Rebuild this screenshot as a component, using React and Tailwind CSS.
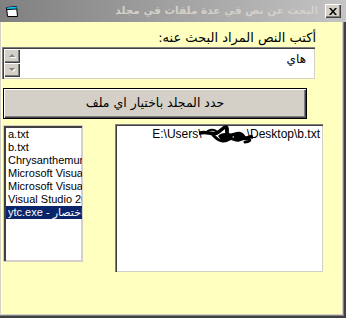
import React from "react";

const items = [
  "a.txt",
  "b.txt",
  "Chrysanthemum.jpg",
  "Microsoft Visual Studio 2010",
  "Microsoft Visual Basic 6.0",
  "Visual Studio 2010",
];

function ScrollBtn({ up }) {
  return (
    <div className="flex h-[14px] w-[16px] items-center justify-center bg-[#d4d0c8] shadow-[inset_1px_1px_0_#fff,inset_-1px_-1px_0_#404040,inset_-2px_-2px_0_#808080]">
      <svg width="7" height="4" viewBox="0 0 7 4">
        {up ? (
          <>
            <path d="M1 4 L4 1 L7 4 Z" fill="#fff" />
            <path d="M0 3 L3 0 L6 3 Z" fill="#808080" />
          </>
        ) : (
          <>
            <path d="M1 1 L7 1 L4 4 Z" fill="#fff" />
            <path d="M0 0 L6 0 L3 3 Z" fill="#808080" />
          </>
        )}
      </svg>
    </div>
  );
}

export default function App() {
  return (
    <div
      className="flex h-[318px] w-[346px] flex-col overflow-hidden bg-[#ffffc0] shadow-[inset_-2px_-2px_0_#404040,inset_-3px_-3px_0_#808080,inset_-4px_-4px_0_#d4d0c8,inset_1px_0_0_#d4d0c8,inset_2px_0_0_#fff]"
      style={{ fontFamily: '"Liberation Sans", "DejaVu Sans", Arial, sans-serif' }}
    >
      {/* Title bar */}
      <div className="flex h-[22px] shrink-0 items-center bg-linear-to-r from-[#808080] to-[#c4c4c4] pl-[6px] pr-[5px]">
        <svg width="12" height="11" viewBox="0 0 12 11" className="shrink-0">
          <path d="M0.5 1.5 L10.5 0.5 L11.5 10.5 L1.5 10.5 Z" fill="#fff" stroke="#000" />
          <path d="M1 1.5 L10.5 0.8 L10.8 3 L1.2 3.5 Z" fill="#00c8ff" />
          <path d="M1 3.5 L11 3" stroke="#000" />
        </svg>
        <div
          dir="rtl"
          className="ml-auto mr-[7px] text-[10.5px] font-bold text-[#d4d0c8] whitespace-nowrap"
          style={{ fontFamily: '"DejaVu Sans", sans-serif' }}
        >
          البحث عن نص في عدة ملفات في مجلد
        </div>
        <div className="flex h-[14px] w-[16px] shrink-0 items-center justify-center bg-[#d4d0c8] shadow-[inset_1px_1px_0_#fff,inset_-1px_-1px_0_#404040,inset_-2px_-2px_0_#808080]">
          <svg width="8" height="7" viewBox="0 0 8 7">
            <path d="M0 0 L2 0 L4 2.5 L6 0 L8 0 L5 3.5 L8 7 L6 7 L4 4.5 L2 7 L0 7 L3 3.5 Z" fill="#000" />
          </svg>
        </div>
      </div>

      {/* Body */}
      <div className="flex flex-col pl-[2px]">
        <div
          dir="rtl"
          className="mt-[8px] mr-[30px] h-[15px] text-[13px] leading-[15px] text-black"
          style={{ fontFamily: '"DejaVu Sans", sans-serif' }}
        >
          أكتب النص المراد البحث عنه:
        </div>

        {/* Text box */}
        <div className="mt-[2px] flex h-[32px] w-[313px] bg-white shadow-[inset_1px_1px_0_#808080,inset_2px_2px_0_#404040,inset_-1px_-1px_0_#d4d0c8] pt-[2px] pl-[2px] pb-[2px]">
          <div className="flex flex-col">
            <ScrollBtn up />
            <ScrollBtn />
          </div>
          <div
            dir="rtl"
            className="flex-1 pr-[9px] pt-[3px] text-[12px] leading-[14px] text-black"
            style={{ fontFamily: '"DejaVu Sans", sans-serif' }}
          >
            هاي
          </div>
        </div>

        {/* Button */}
        <div
          className="mt-[9px] ml-[1px] h-[31px] w-[304px] border border-black bg-[#d4d0c8] shadow-[inset_1px_1px_0_#fff,inset_-1px_-1px_0_#404040,inset_-2px_-2px_0_#808080] text-center text-[12.5px] leading-[28px] text-black"
          style={{ fontFamily: '"DejaVu Sans", sans-serif' }}
        >
          <span dir="rtl">حدد المجلد باختيار اي ملف</span>
        </div>

        {/* Lists */}
        <div className="mt-[5px] flex items-start">
          <div className="ml-[1px] mt-[1px] h-[137px] w-[80px] overflow-hidden border border-[#d4d0c8] bg-white shadow-[inset_2px_2px_0_#404040,inset_-1px_-1px_0_#d4d0c8] pt-[2px] pl-[2px]">
            {items.map((t) => (
              <div key={t} className="h-[13px] whitespace-nowrap pl-[2px] text-[11px] leading-[13px] text-black">
                {t}
              </div>
            ))}
            <div className="h-[13px] whitespace-nowrap bg-[#0a246a] pl-[2px] text-[11px] leading-[13px] text-white">
              ytc.exe - اختصار
            </div>
          </div>

          <div className="relative ml-[32px] h-[148px] w-[208px] bg-white shadow-[inset_1px_1px_0_#808080,inset_2px_2px_0_#404040,inset_-1px_-1px_0_#d4d0c8] pt-[3px] pr-[3px] text-right">
            <div className="whitespace-nowrap text-[12px] leading-[14px] text-black">
              E:\Users\<span className="inline-block w-[45px]"></span>\Desktop\b.txt
            </div>
            <svg
              className="absolute left-[84px] top-[1px]"
              width="54"
              height="20"
              viewBox="0 0 54 20"
            >
              <path
                d="M1 8 C8 6 12 10 18 8 C22 6 24 2 27 2 C30 3 26 9 30 10 C34 11 38 7 42 9 C46 11 44 14 48 13 C51 12 52 11 53 12"
                stroke="#000"
                strokeWidth="3.5"
                fill="none"
                strokeLinecap="round"
              />
              <path
                d="M14 10 C20 17 26 17 30 14 C33 12 36 16 40 15 C44 14 46 12 50 14 C52 15 50 17 46 17"
                stroke="#000"
                strokeWidth="3"
                fill="none"
                strokeLinecap="round"
              />
              <path d="M27 1 L28 13" stroke="#000" strokeWidth="2.5" />
              <path d="M19 11 C22 7 31 7 33 11 C35 15 28 18 22 15 Z" fill="#000" />
              <path d="M35 9 C40 8 45 10 45 13 C45 16 38 16 35 13 Z" fill="#000" />
              <path d="M8 7 C10 4 16 4 18 7" stroke="#000" strokeWidth="2" fill="none" />
            </svg>
          </div>
        </div>
      </div>
    </div>
  );
}
